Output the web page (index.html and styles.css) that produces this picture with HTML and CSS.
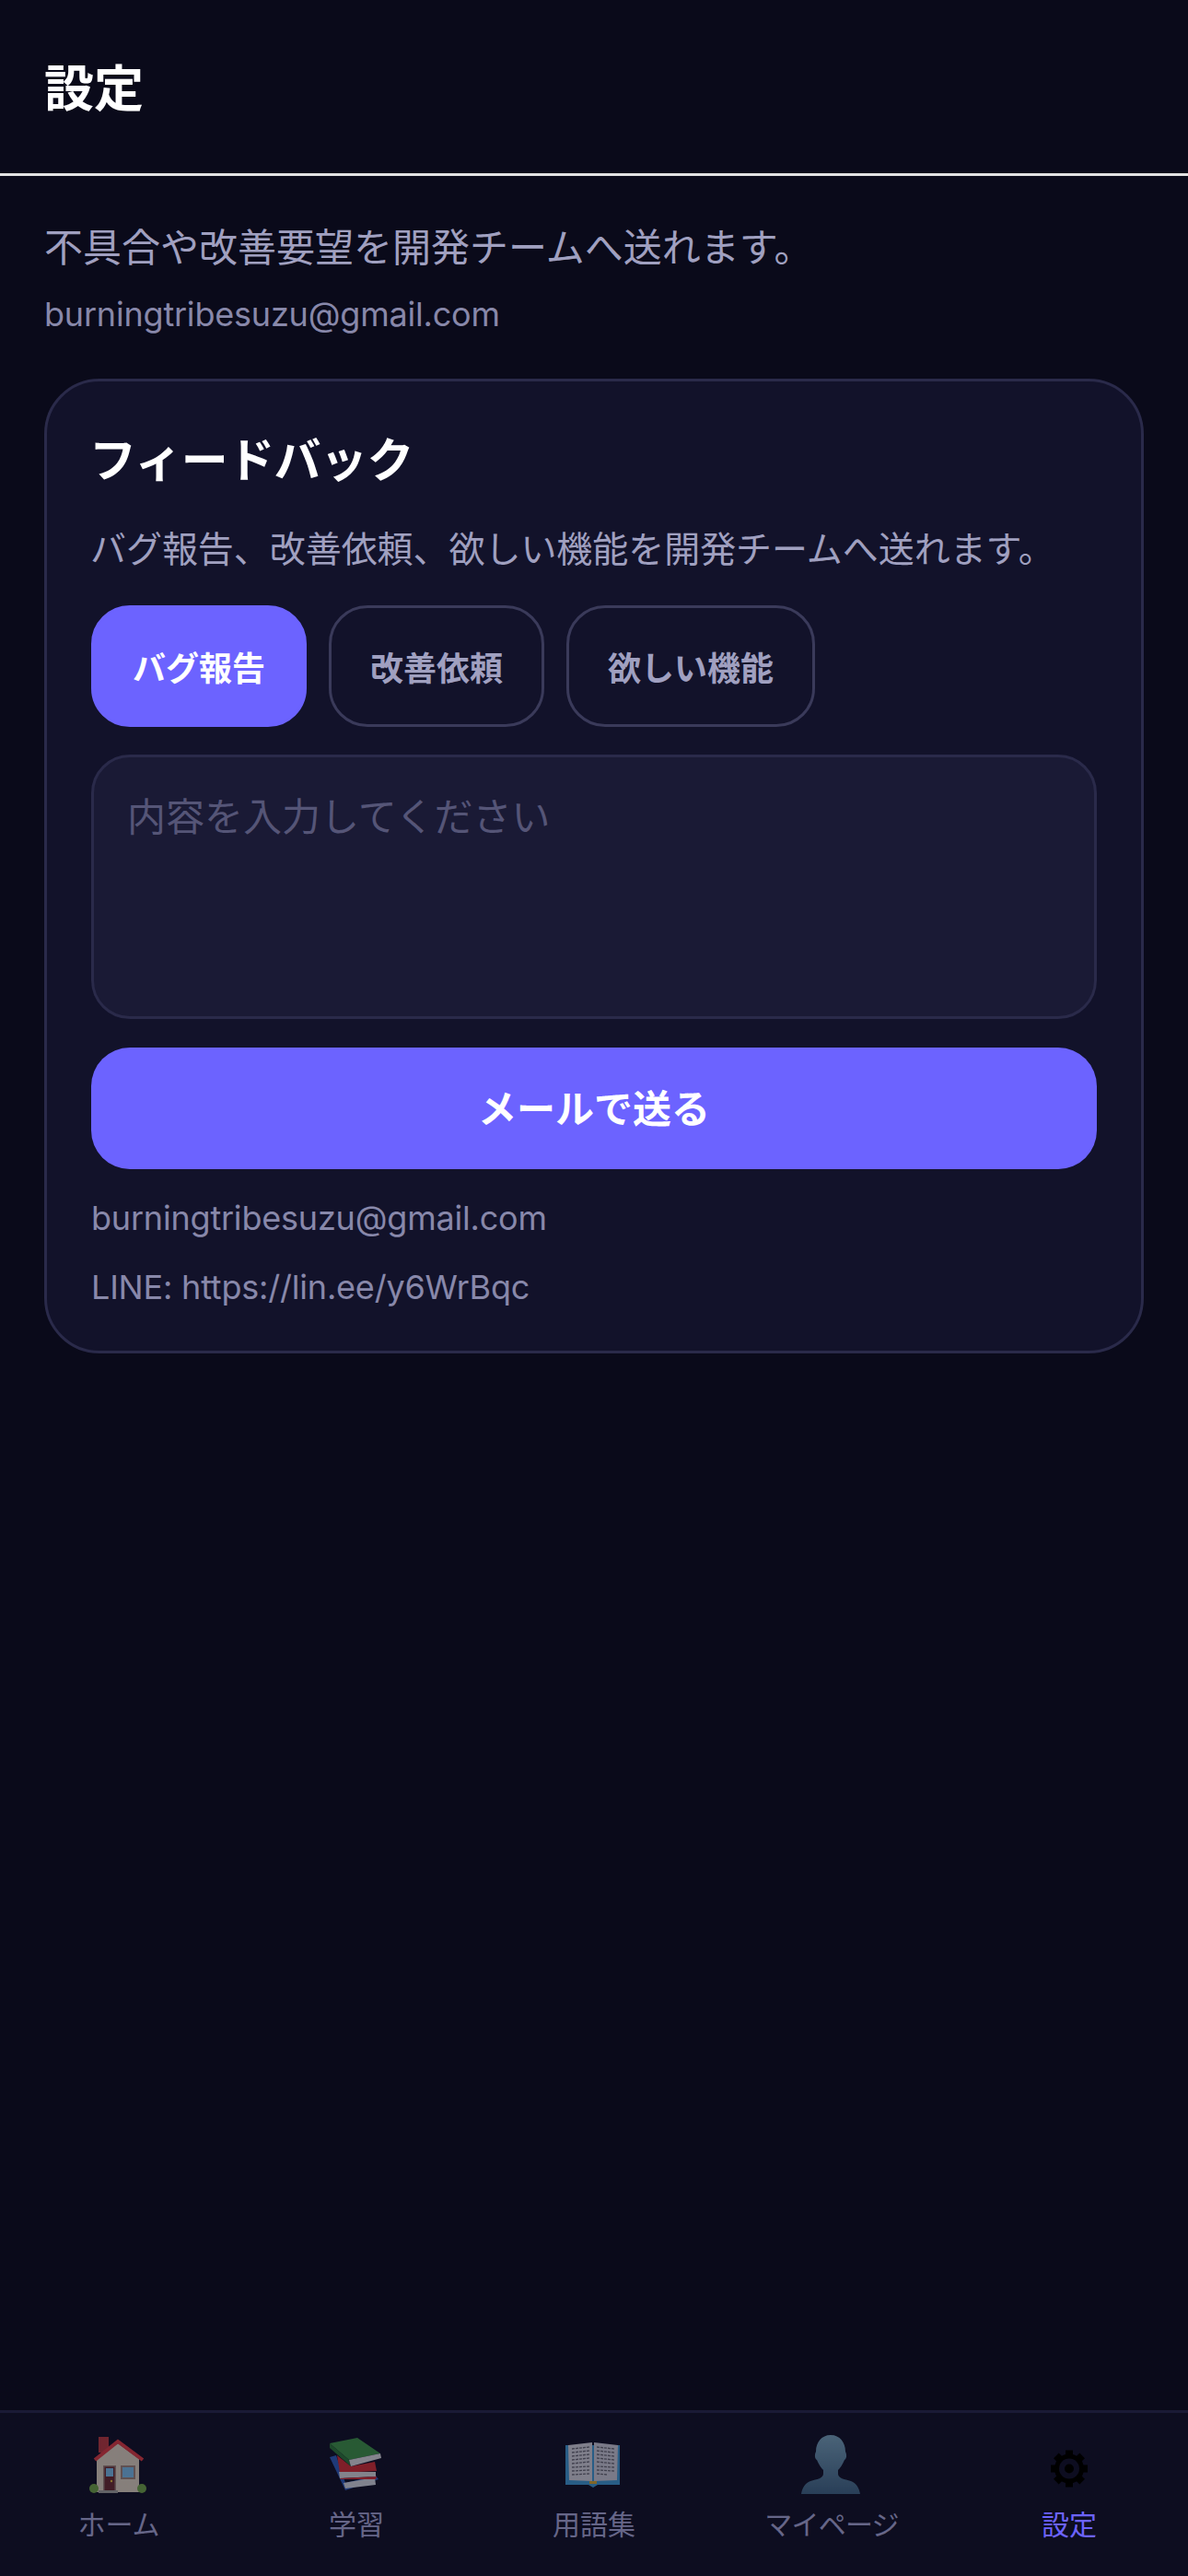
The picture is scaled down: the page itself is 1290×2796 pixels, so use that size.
FILE: index.html
```html
<!DOCTYPE html>
<html lang="ja">
<head>
<meta charset="utf-8">
<title>設定</title>
<link rel="stylesheet" href="styles.css">
</head>
<body>
<div class="app">
  <header class="top-bar"><h1 class="top-title">設定</h1></header>
  <main class="content">
    <p class="intro">不具合や改善要望を開発チームへ送れます。</p>
    <p class="intro-mail">burningtribesuzu@gmail.com</p>
    <section class="card">
      <h2 class="card-title">フィードバック</h2>
      <p class="card-desc">バグ報告、改善依頼、欲しい機能を開発チームへ送れます。</p>
      <div class="chips">
        <button class="chip chip-active">バグ報告</button>
        <button class="chip">改善依頼</button>
        <button class="chip">欲しい機能</button>
      </div>
      <textarea class="message" placeholder="内容を入力してください"></textarea>
      <button class="send">メールで送る</button>
      <p class="contact contact-mail">burningtribesuzu@gmail.com</p>
      <p class="contact contact-line">LINE: https://lin.ee/y6WrBqc</p>
    </section>
  </main>
  <nav class="tabs">
    <a class="tab">
      <svg class="tab-icon" viewBox="0 0 72 66">
        <rect x="14" y="4" width="11" height="17" fill="#c23a3c"/>
        <path d="M12 28 35 11 58 28V64H12Z" fill="#eadcc6"/>
        <path d="M10 29 35 9 62 29" fill="none" stroke="#e83b40" stroke-width="4"/>
        <circle cx="9" cy="60" r="5" fill="#74ab45"/>
        <circle cx="61" cy="60" r="5" fill="#74ab45"/>
        <rect x="19" y="35" width="14" height="27" fill="#a58a7c"/>
        <rect x="20.5" y="36.5" width="11" height="25.5" fill="#6d2a2c"/>
        <rect x="22" y="38" width="8" height="9" fill="#7fc6f2"/>
        <circle cx="28" cy="52" r="1.2" fill="#f2c33c"/>
        <rect x="38" y="35" width="16" height="15" fill="#a58a7c"/>
        <rect x="40" y="37" width="12" height="11" fill="#7fc6f2"/>
        <rect x="14" y="62" width="21" height="3" fill="#a8a8a0"/>
      </svg>
      <span class="tab-label">ホーム</span>
    </a>
    <a class="tab">
      <svg class="tab-icon" viewBox="0 0 72 66">
        <path d="M7 26 14 24 24 54 57 46 60 50 24 62Z" fill="#2f5fc0"/>
        <path d="M22 54 56 48 57 56 24 60Z" fill="#dfe3e8"/>
        <path d="M15 24 30 36 56 31 58 41 18 43Z" fill="#dc2e32"/>
        <path d="M17 42 57 42 57 47 18 49Z" fill="#e4e4e4"/>
        <path d="M18 49 58 47 57 50 19 50Z" fill="#dc2e32"/>
        <path d="M7 11 37 5 62 22 28 29Z" fill="#3f9a46"/>
        <path d="M7 11 7 16 30 36 28 29Z" fill="#2b7a34"/>
        <path d="M28 29 62 22 63 27 30 36Z" fill="#e6e6e6"/>
      </svg>
      <span class="tab-label">学習</span>
    </a>
    <a class="tab">
      <svg class="tab-icon" viewBox="0 0 72 66">
        <path d="M5 13H64V56H40L35 59 30 56H5Z" fill="#3f9fda"/>
        <path d="M8 13 34 10V52L9 51Z" fill="#dcdce4"/>
        <path d="M36 10 62 13 61 51 36 52Z" fill="#d4d4de"/>
        <path d="M12 17 31 15M12 21 31 19M12 25 31 23M12 29 31 27M12 33 31 31M12 37 31 36M12 41 31 40M12 45 31 44M39 15 58 17M39 19 58 21M39 23 58 25M39 27 58 29M39 31 58 33M39 36 58 37M39 40 58 41M39 44 50 45" stroke="#6c6c74" stroke-width="1.3" stroke-dasharray="3 1" fill="none"/>
        <rect x="31" y="52" width="8" height="3" fill="#e0b030"/>
      </svg>
      <span class="tab-label">用語集</span>
    </a>
    <a class="tab">
      <svg class="tab-icon" viewBox="0 0 72 66">
        <defs>
          <linearGradient id="bust" x1="0" y1="0" x2="0" y2="1">
            <stop offset="0" stop-color="#7caac1"/>
            <stop offset="1" stop-color="#416886"/>
          </linearGradient>
        </defs>
        <path d="M35 2C25 2 19 10 19 20 17 24 18 28 20 29 22 34 25 38 27 40V44C27 49 20 50 13 52 7 54 4 60 3 66H67C66 60 63 54 57 52 50 50 43 49 43 44V40C45 38 48 34 50 29 52 28 53 24 51 20 51 10 45 2 35 2Z" fill="url(#bust)"/>
      </svg>
      <span class="tab-label tab-label-tight">マイページ</span>
    </a>
    <a class="tab tab-active">
      <svg class="tab-icon" viewBox="0 0 72 66">
        <g transform="translate(36 38.5)" fill="#000">
          <circle r="16"/>
          <rect x="-4" y="-20" width="8" height="40"/>
          <rect x="-4" y="-20" width="8" height="40" transform="rotate(45)"/>
          <rect x="-4" y="-20" width="8" height="40" transform="rotate(90)"/>
          <rect x="-4" y="-20" width="8" height="40" transform="rotate(135)"/>
          <circle r="11" fill="#0d0d20"/>
          <circle r="5"/>
        </g>
      </svg>
      <span class="tab-label">設定</span>
    </a>
  </nav>
</div>
</body>
</html>
```
FILE: styles.css
```css
* { box-sizing: border-box; }
html, body { margin: 0; padding: 0; }
body {
  background: #0a0a1a;
  font-family: Inter, "Noto Sans CJK JP", sans-serif;
  color: #a0a0c0;
}
.app {
  min-height: 2796px;
  display: flex;
  flex-direction: column;
}
.top-bar {
  height: 191px;
  border-bottom: 3px solid #e2e2e2;
  padding: 6px 48px 0;
  display: flex;
  align-items: center;
}
.top-title {
  margin: 0;
  font-size: 54px;
  line-height: 72px;
  font-weight: 700;
  color: #fff;
}
.content {
  flex: 1;
  padding: 48px 48px 0;
}
.intro {
  margin: 0;
  font-size: 42px;
  line-height: 60px;
  color: #a0a0c0;
}
.intro-mail {
  margin: 15px 0 43px;
  font-size: 36px;
  line-height: 54px;
  letter-spacing: -.2px;
  color: #8888aa;
}
.card {
  background: #12122a;
  border: 3px solid #2a2a4a;
  border-radius: 60px;
  padding: 48px 48px 42px;
}
.card-title {
  margin: 2px 0 -2px -2px;
  font-size: 51px;
  line-height: 72px;
  letter-spacing: -.6px;
  font-weight: 700;
  color: #fff;
}
.card-desc {
  margin: 35px 0 34px -1px;
  font-size: 39px;
  line-height: 54px;
  letter-spacing: -.05px;
  color: #a0a0c0;
}
.chips {
  display: flex;
  gap: 24px;
}
.chip {
  height: 132px;
  padding: 0 42px;
  border: 3px solid #3a3a5a;
  border-radius: 42px;
  background: transparent;
  color: #a0a0c0;
  font-family: inherit;
  font-size: 36px;
  font-weight: 700;
}
.chip-active {
  background: #6c63ff;
  border-color: #6c63ff;
  color: #fff;
}
.message {
  display: block;
  width: 100%;
  height: 287px;
  margin-top: 30px;
  padding: 38px 36px 34px;
  background: #1a1a35;
  border: 3px solid #2a2a4a;
  border-radius: 42px;
  font-family: inherit;
  font-size: 42px;
  line-height: 54px;
  color: #fff;
  resize: none;
}
.message::placeholder { color: #555577; opacity: 1; }
.send {
  display: block;
  width: 100%;
  height: 132px;
  margin-top: 31px;
  padding: 0 0 6px;
  border: 0;
  border-radius: 42px;
  background: #6c63ff;
  color: #fff;
  font-family: inherit;
  font-size: 42px;
  font-weight: 700;
}
.contact {
  margin: 0;
  font-size: 36px;
  line-height: 54px;
  letter-spacing: -.2px;
  color: #8888aa;
}
.contact-mail { margin-top: 26px; }
.contact-line { margin-top: 21px; }
.tabs {
  height: 180px;
  border-top: 3px solid #1a1a35;
  background: #0d0d20;
  display: flex;
  padding-top: 22px;
}
.tab {
  flex: 1;
  display: flex;
  flex-direction: column;
  align-items: center;
  gap: 12px;
  color: #666688;
}
.tab-icon {
  display: block;
  width: 72px;
  height: 66px;
  opacity: .55;
}
.tab-label {
  font-size: 30px;
  line-height: 42px;
}
.tab-label-tight { letter-spacing: -.8px; }
.tab-active { color: #6c63ff; }
.tab-active .tab-icon { opacity: 1; }
```
